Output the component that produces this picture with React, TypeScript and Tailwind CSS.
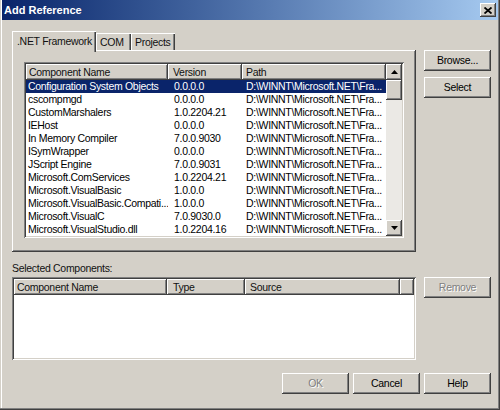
import React from "react";

const raised =
  "shadow-[inset_-1px_-1px_0_#404040,inset_1px_1px_0_#ffffff,inset_-2px_-2px_0_#808080,inset_2px_2px_0_#d4d0c8]";
const sunken =
  "shadow-[inset_1px_1px_0_#808080,inset_-1px_-1px_0_#ffffff,inset_2px_2px_0_#404040,inset_-2px_-2px_0_#d4d0c8]";
const headerCell =
  "h-[16px] leading-[16px] shrink-0 overflow-hidden whitespace-nowrap bg-[#d4d0c8] shadow-[inset_-1px_-1px_0_#404040,inset_1px_1px_0_#ffffff,inset_-2px_-2px_0_#808080]";

const components: [string, string][] = [
  ["Configuration System Objects", "0.0.0.0"],
  ["cscompmgd", "0.0.0.0"],
  ["CustomMarshalers", "1.0.2204.21"],
  ["IEHost", "0.0.0.0"],
  ["In Memory Compiler", "7.0.0.9030"],
  ["ISymWrapper", "0.0.0.0"],
  ["JScript Engine", "7.0.0.9031"],
  ["Microsoft.ComServices", "1.0.2204.21"],
  ["Microsoft.VisualBasic", "1.0.0.0"],
  ["Microsoft.VisualBasic.Compati...", "1.0.0.0"],
  ["Microsoft.VisualC", "7.0.9030.0"],
  ["Microsoft.VisualStudio.dll", "1.0.2204.16"],
];

const path = "D:\\WINNT\\Microsoft.NET\\Fra...";

function Button({ label, disabled }: { label: string; disabled?: boolean }) {
  return (
    <div
      className={`flex h-[21px] w-[67px] shrink-0 items-center justify-center bg-[#d4d0c8] ${raised} ${
        disabled ? "text-[#808080] [text-shadow:1px_1px_0_#ffffff]" : "text-black"
      }`}
    >
      {label}
    </div>
  );
}

function Arrow({ up }: { up?: boolean }) {
  return (
    <div className={`flex h-[16px] w-[16px] items-center justify-center bg-[#d4d0c8] ${raised}`}>
      <svg width="7" height="4" viewBox="0 0 7 4">
        {up ? <polygon points="3.5,0 7,4 0,4" fill="#000" /> : <polygon points="0,0 7,0 3.5,4" fill="#000" />}
      </svg>
    </div>
  );
}

function ReferenceList() {
  return (
    <div className={`flex h-[176px] w-[380px] bg-white p-[2px] ${sunken}`}>
      <div className="flex w-[360px] flex-col">
        <div className="flex">
          <div className={`${headerCell} w-[142px] pl-[3px]`}>Component Name</div>
          <div className={`${headerCell} w-[74px] pl-[5px]`}>Version</div>
          <div className={`${headerCell} w-[144px] pl-[4px]`}>Path</div>
        </div>
        {components.map(([name, version], i) => (
          <div
            key={name}
            className={`flex h-[13px] leading-[13px] whitespace-nowrap ${
              i === 0 ? "bg-[#0a246a] text-white" : "text-black"
            }`}
          >
            <div className="w-[142px] shrink-0 overflow-hidden pl-[2px]">{name}</div>
            <div className="w-[74px] shrink-0 overflow-hidden pl-[6px]">{version}</div>
            <div className="w-[144px] shrink-0 overflow-hidden pl-[4px]">{path}</div>
          </div>
        ))}
      </div>
      <div className="flex w-[16px] flex-col">
        <Arrow up />
        <div className={`h-[20px] bg-[#d4d0c8] ${raised}`} />
        <div className="flex-1 bg-[#ebe9e5]" />
        <Arrow />
      </div>
    </div>
  );
}

export default function App() {
  return (
    <div className="flex h-[410px] w-[500px] flex-col bg-[#d4d0c8] px-[2px] font-['Liberation_Sans',Arial,sans-serif] text-[10.5px] tracking-[-0.3px] text-[#111] shadow-[inset_-1px_-1px_0_#404040,inset_-2px_-2px_0_#808080,inset_1px_0_0_#d4d0c8,inset_2px_0_0_#ffffff]">
      <div className="flex h-[20px] items-center justify-between bg-linear-to-r from-[#0a246a] to-[#a6caf0] pl-[2px] pr-[2px]">
        <span className="text-[11px] font-bold tracking-normal text-white">Add Reference</span>
        <div className={`flex h-[14px] w-[16px] items-center justify-center bg-[#d4d0c8] ${raised}`}>
          <svg width="8" height="7" viewBox="0 0 8 7">
            <path d="M0.5 0.5 L7.5 6.5 M7.5 0.5 L0.5 6.5" stroke="#000" strokeWidth="1.8" />
          </svg>
        </div>
      </div>

      <div className="flex flex-col pl-[10px] pt-[11px]">
        <div className="flex gap-[8px]">
          <div className="flex w-[404px] flex-col">
            <div className="flex h-[19px] items-end">
              <div className="relative z-10 -mb-[2px] flex h-[21px] w-[84px] items-start bg-[#d4d0c8] pl-[5px] pt-[3px] shadow-[inset_1px_1px_0_#ffffff,inset_-1px_0_0_#404040,inset_-2px_0_0_#808080]">
                .NET Framework
              </div>
              <div className="flex h-[17px] w-[35px] items-start pl-[4px] pt-[2px] shadow-[inset_1px_1px_0_#ffffff,inset_-1px_0_0_#404040,inset_-2px_0_0_#808080]">
                COM
              </div>
              <div className="flex h-[17px] w-[44px] items-start pl-[4px] pt-[2px] shadow-[inset_1px_1px_0_#ffffff,inset_-1px_0_0_#404040,inset_-2px_0_0_#808080]">
                Projects
              </div>
            </div>
            <div className={`h-[202px] pl-[12px] pt-[12px] ${raised}`}>
              <ReferenceList />
            </div>
          </div>
          <div className="flex flex-col gap-[6px] pt-[19px]">
            <Button label="Browse..." />
            <Button label="Select" />
          </div>
        </div>

        <div className="mt-[10px] h-[13px] leading-[13px]">Selected Components:</div>

        <div className="mt-[2px] flex gap-[8px]">
          <div className={`flex h-[83px] w-[404px] flex-col bg-white p-[2px] ${sunken}`}>
            <div className="flex">
              <div className={`${headerCell} w-[153px] pl-[3px]`}>Component Name</div>
              <div className={`${headerCell} w-[78px] pl-[6px]`}>Type</div>
              <div className={`${headerCell} w-[155px] pl-[5px]`}>Source</div>
              <div className={`${headerCell} w-[14px]`} />
            </div>
          </div>
          <Button label="Remove" disabled />
        </div>

        <div className="mt-[13px] flex w-[479px] justify-end gap-[4px]">
          <Button label="OK" disabled />
          <Button label="Cancel" />
          <Button label="Help" />
        </div>
      </div>
    </div>
  );
}
